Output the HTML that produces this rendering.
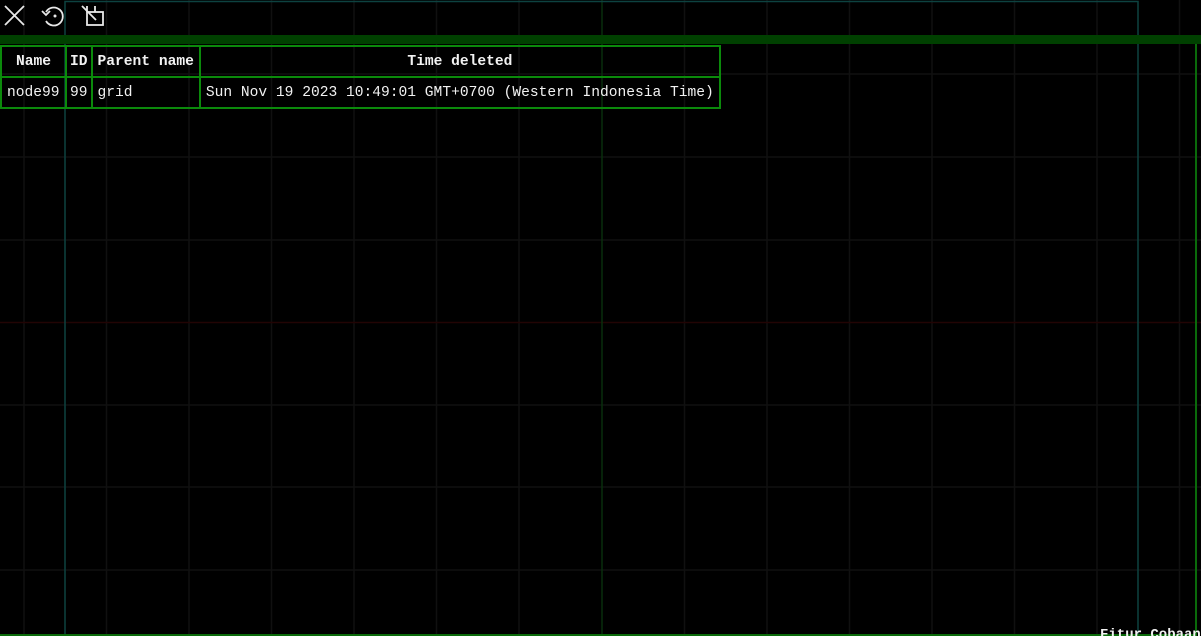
<!DOCTYPE html>
<html><head><meta charset="utf-8"><style>
html,body{margin:0;padding:0;background:#000;width:1201px;height:636px;overflow:hidden;position:relative;font-family:"Liberation Mono",monospace;}
svg.bg{position:absolute;left:0;top:0;}
table{position:absolute;left:0;top:45px;border-collapse:collapse;color:#f2f2f2;font-size:14.6px;}
td,th{border:2px solid #0b8a0b;height:29px;padding:0 5px;white-space:nowrap;text-align:left;}
th{font-weight:bold;text-align:center;}
.ft{position:absolute;left:1100px;top:627px;color:#f2f2f2;font-size:14px;font-family:"Liberation Mono",monospace;font-weight:bold;}
</style></head><body>
<svg class="bg" width="1201" height="636">
<g stroke="#101010" stroke-width="1.5">
<line x1="24" y1="0" x2="24" y2="636"/><line x1="106.5" y1="0" x2="106.5" y2="636"/><line x1="189" y1="0" x2="189" y2="636"/><line x1="271.5" y1="0" x2="271.5" y2="636"/><line x1="354" y1="0" x2="354" y2="636"/><line x1="436.5" y1="0" x2="436.5" y2="636"/><line x1="519" y1="0" x2="519" y2="636"/><line x1="684.5" y1="0" x2="684.5" y2="636"/><line x1="767" y1="0" x2="767" y2="636"/><line x1="849.5" y1="0" x2="849.5" y2="636"/><line x1="932" y1="0" x2="932" y2="636"/><line x1="1014.5" y1="0" x2="1014.5" y2="636"/><line x1="1097" y1="0" x2="1097" y2="636"/><line x1="1179.5" y1="0" x2="1179.5" y2="636"/>
<line x1="0" y1="74" x2="1201" y2="74"/><line x1="0" y1="157" x2="1201" y2="157"/><line x1="0" y1="240" x2="1201" y2="240"/><line x1="0" y1="405" x2="1201" y2="405"/><line x1="0" y1="487" x2="1201" y2="487"/><line x1="0" y1="570" x2="1201" y2="570"/>
</g>
<line x1="0" y1="322.5" x2="1201" y2="322.5" stroke="#220404" stroke-width="1.5"/>
<line x1="602" y1="0" x2="602" y2="636" stroke="#082e0c" stroke-width="1.5"/>
<path d="M65 636 V1.5 H1138 V636" fill="none" stroke="#0d4240" stroke-width="1.5"/>
<rect x="0" y="35" width="1201" height="9" fill="#004000"/>
<path d="M1196 44 V635 H0" fill="none" stroke="#0a6a0a" stroke-width="2"/>
<g stroke="#e8e8e8" stroke-width="1.8" fill="none">
<path d="M5 6 L24 25 M24 6 L5 25"/>
<path d="M46 12 A9 9 0 1 1 46 21 M42 11 L46 15 L50 11"/>
<circle cx="55" cy="16" r="1.5" fill="#e8e8e8" stroke="none"/>
<rect x="87" y="12" width="16" height="13"/>
<path d="M82 6 L96 20 M87 6 V12 M95 6 V12"/>
</g>
</svg>
<table>
<tr><th style="width:53px;padding:0 5px">Name</th><th style="padding:0 3px">ID</th><th>Parent name</th><th style="width:508px">Time deleted</th></tr>
<tr><td>node99</td><td style="padding:0 3px">99</td><td>grid</td><td>Sun Nov 19 2023 10:49:01 GMT+0700 (Western Indonesia Time)</td></tr>
</table>
<div class="ft">Fitur Cobaan</div>
</body></html>
